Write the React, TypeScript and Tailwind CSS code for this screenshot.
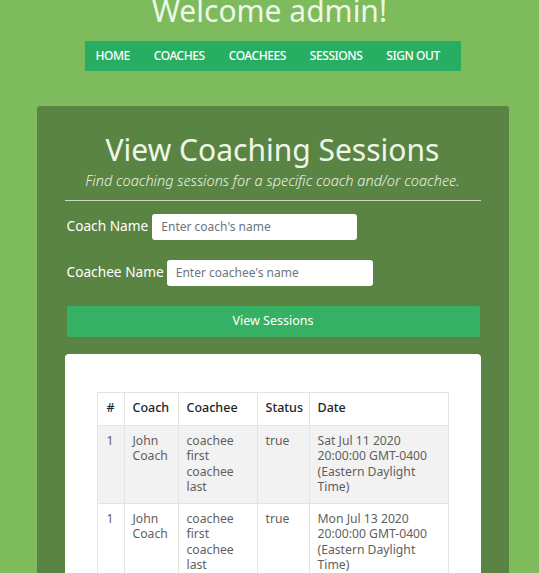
const sessions = [
  { id: 1, coach: 'John Coach', coachee: 'coachee first coachee last', status: 'true', date: 'Sat Jul 11 2020 20:00:00 GMT-0400 (Eastern Daylight Time)' },
  { id: 1, coach: 'John Coach', coachee: 'coachee first coachee last', status: 'true', date: 'Mon Jul 13 2020 20:00:00 GMT-0400 (Eastern Daylight Time)' },
];

const navItems = ['HOME', 'COACHES', 'COACHEES', 'SESSIONS', 'SIGN OUT'];

export default function App() {
  return (
    <div
      className="min-h-screen bg-[#7dbb5c] overflow-hidden"
      style={{ fontFamily: '"Noto Sans", sans-serif' }}
    >
      <h1 className="text-center text-[30px] leading-[36px] -mt-[7px] text-[#eef6e8]">Welcome admin!</h1>

      <nav className="mx-auto mt-[12px] flex h-[30px] w-[376px] translate-x-[3px] items-center gap-[24px] bg-[#28ae62] pl-[11px]">
        {navItems.map((item) => (
          <a key={item} className="text-[12px] font-medium tracking-[-0.45px] text-white">
            {item}
          </a>
        ))}
      </nav>

      <div className="mx-auto mt-[35px] w-[472px] translate-x-[3px] rounded-t-[3px] bg-[#5a8444] px-[28px] pt-[26px] pb-10">
        <h2 className="text-center text-[30px] leading-[36px] text-[#eef6e8]">View Coaching Sessions</h2>
        <p className="mt-[2px] text-center text-[14.5px] italic font-light text-[#e8f2e0]">
          Find coaching sessions for a specific coach and/or coachee.
        </p>
        <hr className="mt-[8px] border-[#c9dcbc]" />

        <div className="mt-[13px] flex items-center pl-[2px]">
          <label className="text-[13.7px] text-white">Coach Name</label>
          <input
            placeholder="Enter coach's name"
            className="ml-[4px] h-[26px] w-[205px] rounded-[3px] bg-white px-[9px] text-[12px] text-gray-700 placeholder:text-[#6c757d] outline-none"
          />
        </div>

        <div className="mt-[20px] flex items-center pl-[2px]">
          <label className="text-[13.7px] text-white">Coachee Name</label>
          <input
            placeholder="Enter coachee's name"
            className="ml-[3px] h-[26px] w-[206px] rounded-[3px] bg-white px-[9px] text-[12px] text-gray-700 placeholder:text-[#6c757d] outline-none"
          />
        </div>

        <button className="mt-[20px] ml-[2px] h-[31px] w-[413px] rounded-[2px] bg-[#36b163] text-[12.5px] text-white">
          View Sessions
        </button>

        <div className="mt-[17px] rounded-[4px] bg-white pt-[38px] pb-10 pl-[32px] pr-[34px]">
          <table className="w-[352px] border-collapse text-[12.2px] text-[#5f5f5f]">
            <thead>
              <tr className="h-[33px] text-left text-[12.5px] text-[#212529]">
                <th className="w-[27px] border border-[#e3e3e3] pl-[9px] font-medium">#</th>
                <th className="w-[54px] border border-[#e3e3e3] pl-[8px] font-medium">Coach</th>
                <th className="w-[79px] border border-[#e3e3e3] pl-[8px] font-medium">Coachee</th>
                <th className="w-[52px] border border-[#e3e3e3] pl-[8px] font-medium">Status</th>
                <th className="border border-[#e3e3e3] pl-[8px] font-medium">Date</th>
              </tr>
            </thead>
            <tbody>
              {sessions.map((s, i) => (
                <tr key={i} className={i % 2 === 0 ? 'bg-[#f2f2f2]' : 'bg-white'}>
                  <td className="border border-[#e3e3e3] pl-[9px] pt-[7px] pb-[8px] align-top leading-[15.5px]">{s.id}</td>
                  <td className="border border-[#e3e3e3] pl-[8px] pt-[7px] pb-[8px] align-top leading-[15.5px]">{s.coach}</td>
                  <td className="border border-[#e3e3e3] pl-[8px] pr-[6px] pt-[7px] pb-[8px] align-top leading-[15.5px]">{s.coachee}</td>
                  <td className="border border-[#e3e3e3] pl-[8px] pt-[7px] pb-[8px] align-top leading-[15.5px]">{s.status}</td>
                  <td className="border border-[#e3e3e3] pl-[8px] pr-[12px] pt-[7px] pb-[8px] align-top leading-[15.5px]">{s.date}</td>
                </tr>
              ))}
            </tbody>
          </table>
        </div>
      </div>
    </div>
  );
}
